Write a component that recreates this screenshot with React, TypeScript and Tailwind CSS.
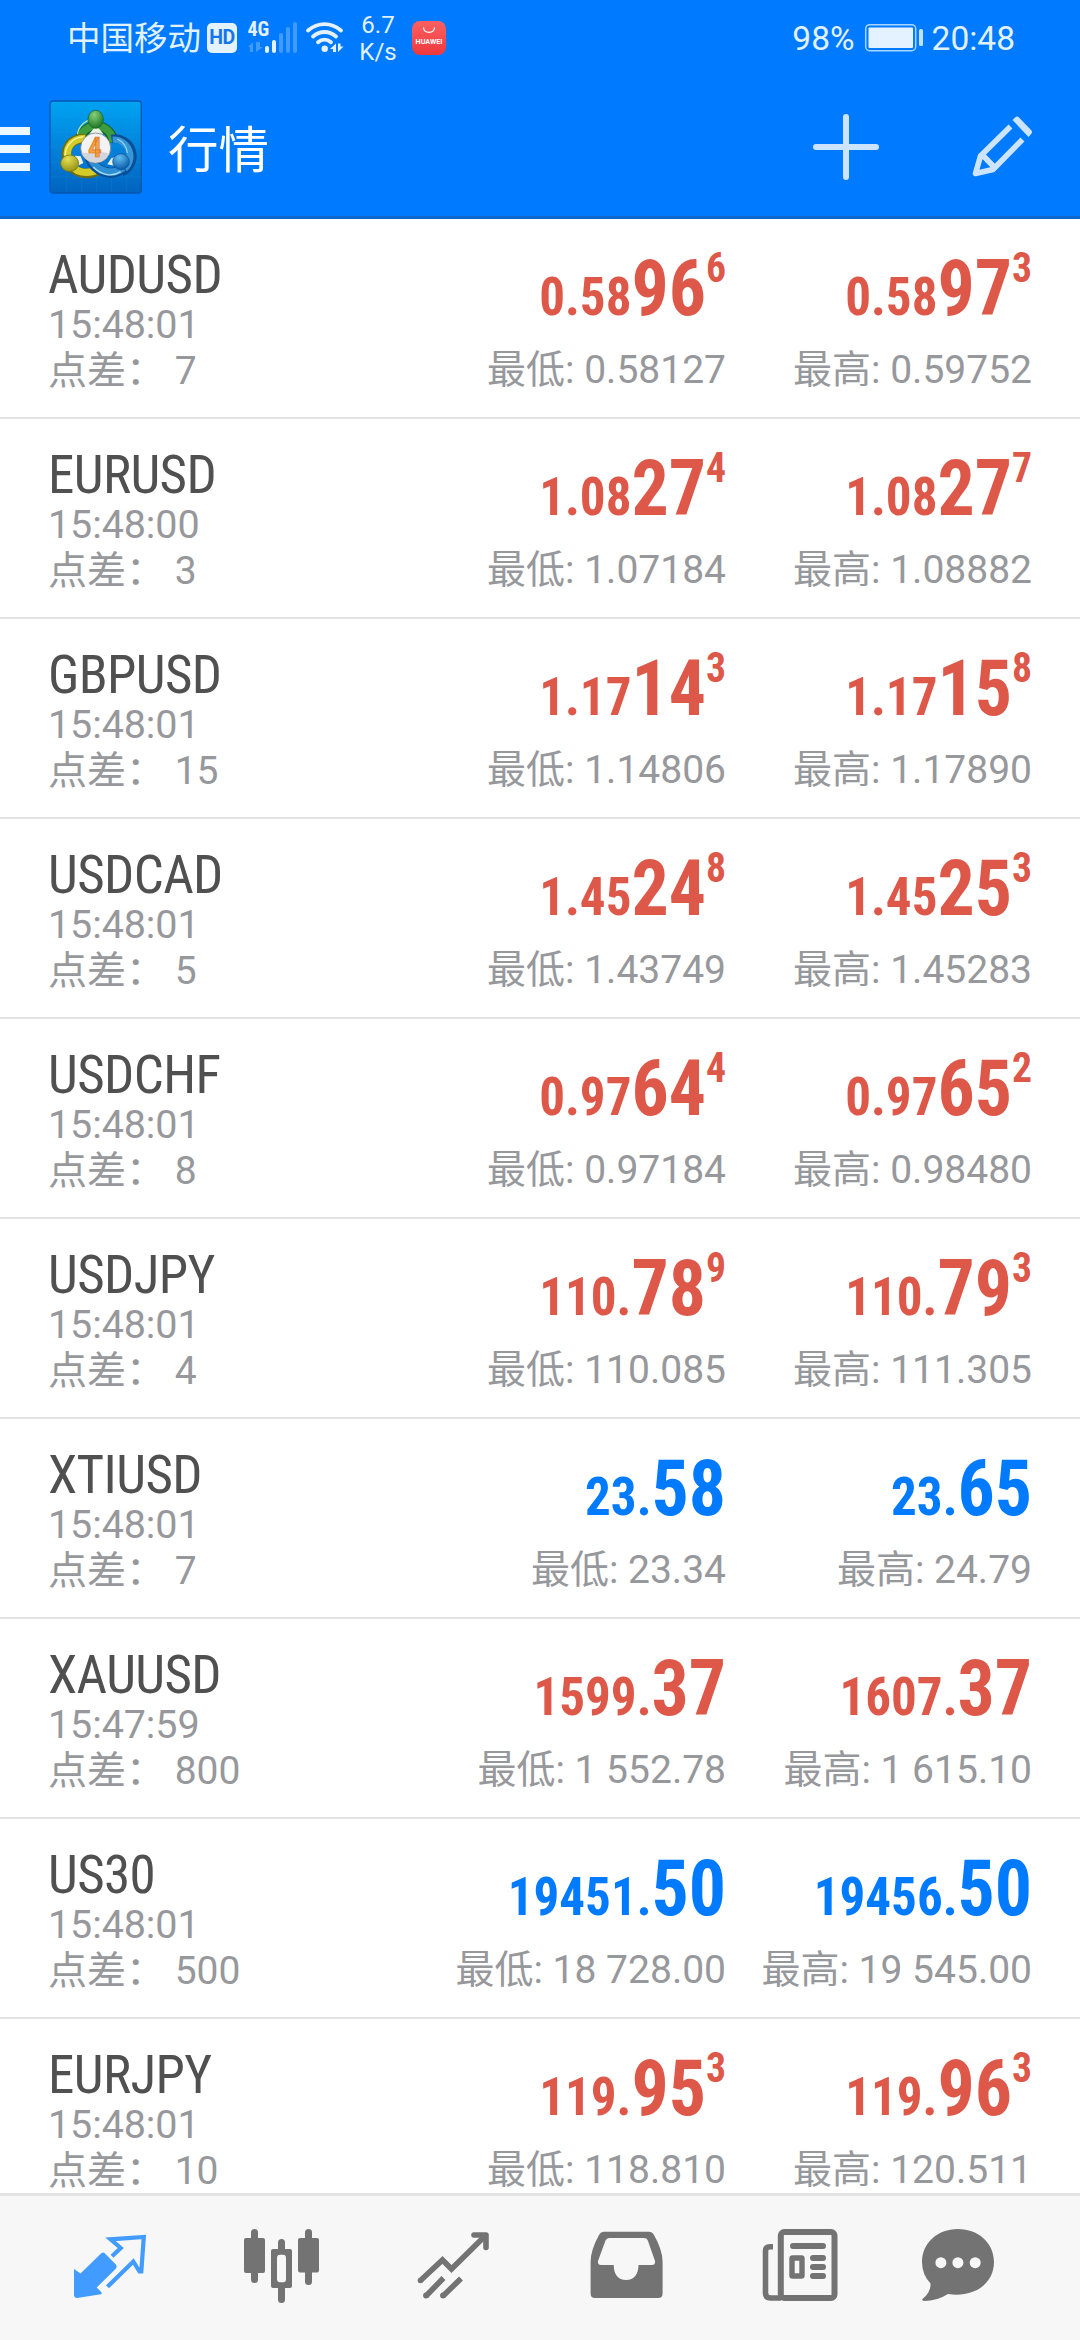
import React from "react";

type Price = { small: string; big: string; sup?: string };
type Quote = {
  symbol: string;
  time: string;
  spread: string;
  up?: boolean;
  bid: Price;
  ask: Price;
  low: string;
  high: string;
};

const p = (small: string, big: string, sup?: string): Price => ({ small, big, sup });

const quotes: Quote[] = [
  { symbol: "AUDUSD", time: "15:48:01", spread: "7", bid: p("0.58", "96", "6"), ask: p("0.58", "97", "3"), low: "0.58127", high: "0.59752" },
  { symbol: "EURUSD", time: "15:48:00", spread: "3", bid: p("1.08", "27", "4"), ask: p("1.08", "27", "7"), low: "1.07184", high: "1.08882" },
  { symbol: "GBPUSD", time: "15:48:01", spread: "15", bid: p("1.17", "14", "3"), ask: p("1.17", "15", "8"), low: "1.14806", high: "1.17890" },
  { symbol: "USDCAD", time: "15:48:01", spread: "5", bid: p("1.45", "24", "8"), ask: p("1.45", "25", "3"), low: "1.43749", high: "1.45283" },
  { symbol: "USDCHF", time: "15:48:01", spread: "8", bid: p("0.97", "64", "4"), ask: p("0.97", "65", "2"), low: "0.97184", high: "0.98480" },
  { symbol: "USDJPY", time: "15:48:01", spread: "4", bid: p("110.", "78", "9"), ask: p("110.", "79", "3"), low: "110.085", high: "111.305" },
  { symbol: "XTIUSD", time: "15:48:01", spread: "7", up: true, bid: p("23.", "58"), ask: p("23.", "65"), low: "23.34", high: "24.79" },
  { symbol: "XAUUSD", time: "15:47:59", spread: "800", bid: p("1599.", "37"), ask: p("1607.", "37"), low: "1 552.78", high: "1 615.10" },
  { symbol: "US30", time: "15:48:01", spread: "500", up: true, bid: p("19451.", "50"), ask: p("19456.", "50"), low: "18 728.00", high: "19 545.00" },
  { symbol: "EURJPY", time: "15:48:01", spread: "10", bid: p("119.", "95", "3"), ask: p("119.", "96", "3"), low: "118.810", high: "120.511" },
];

function SignalIcon() {
  return (
    <svg className="ml-[8px] h-[40px] w-[54px] overflow-visible" viewBox="245 18 54 40">
      <text x="247.5" y="36.3" fontSize="20" fontWeight="700" fill="#e4f1ff" fontFamily="'Roboto Condensed', Roboto, sans-serif">4G</text>
      <path d="M248 47l5-5v10h-3v-5zM256 42v10l7-5h-3v-5z" fill="#3f9bff" />
      <rect x="265" y="46" width="4" height="7" rx="2" fill="#e4f1ff" />
      <rect x="272" y="40" width="4" height="13" rx="2" fill="#e4f1ff" />
      <rect x="279" y="33" width="4" height="20" rx="2" fill="#3f9bff" />
      <rect x="286" y="27" width="4" height="26" rx="2" fill="#3f9bff" />
      <rect x="293" y="22" width="4" height="31" rx="2" fill="#3f9bff" />
    </svg>
  );
}

function WifiIcon() {
  return (
    <svg className="ml-[6px] h-[36px] w-[40px]" viewBox="305 20 40 36" fill="none" stroke="#e4f1ff" strokeWidth="3.8" strokeLinecap="round">
      <path d="M308 30.5C318 22 331 22 341 30.5" />
      <path d="M313 36.5C320 30.5 329 30.5 336 36.5" />
      <path d="M318 42.3C322 38.8 327 38.8 331 42.3" />
      <circle cx="324.700" cy="48.800" r="3.200" fill="#e4f1ff" stroke="none" />
      <path d="M330 49l6-5.500v8.500h-3v-3zM338 43.500v8.500l5.500-5.500h-3v-3z" fill="#e4f1ff" stroke="none" />
    </svg>
  );
}

function StatusBar() {
  return (
    <div className="flex h-[76px] items-center pl-[67px] pr-[65px] text-[#e0f1ff]">
      <span className="w-[136px] pt-[2px] text-[33.500px] leading-[48px] whitespace-nowrap">中国移动</span>
      <span className="ml-[4px] flex h-[30px] w-[30px] items-center justify-center rounded-[5px] bg-[#e4f1ff] text-[19.500px] leading-none font-bold tracking-[-0.500px] text-[#1476ec]">
        HD
      </span>
      <SignalIcon />
      <WifiIcon />
      <span className="ml-[16px] flex w-[34px] flex-col items-center pt-[2px] text-[24px] leading-[27px]">
        <span>6.7</span>
        <span>K/s</span>
      </span>
      <span className="ml-[17px] flex h-[34px] w-[34px] flex-col items-center rounded-[8px] bg-linear-to-b from-[#fd6063] to-[#ee373c]">
        <svg className="mt-[6px] h-[7px] w-[14px]" viewBox="0 0 14 7" fill="none" stroke="#ffffff" strokeWidth="1.200">
          <path d="M1.500 0.500C2 7 12 7 12.500 0.500" />
        </svg>
        <span className="mt-[4px] text-[7.200px] leading-[7px] font-bold text-white">HUAWEI</span>
      </span>
      <span className="ml-auto pt-[2px] text-[33.500px] leading-[48px]">98%</span>
      <svg className="ml-[9px] h-[30px] w-[60px]" viewBox="863 23 60 30">
        <rect x="864.700" y="24.700" width="50" height="26" rx="4" fill="none" stroke="#a8d5ff" strokeWidth="1.500" />
        <rect x="867.500" y="27.500" width="44.500" height="20.500" rx="1" fill="#e4f1ff" />
        <rect x="918" y="29" width="4" height="17" rx="1.500" fill="#c0e0ff" />
      </svg>
      <span className="ml-[8px] pt-[2px] text-[33.500px] leading-[48px]">20:48</span>
    </div>
  );
}

function Logo() {
  return (
    <svg className="h-[96px] w-[96px]" viewBox="24 26 288 288">
      <defs>
        <linearGradient id="tile" x1="0" y1="0" x2="0" y2="1">
          <stop offset="0" stopColor="#00a3f2" />
          <stop offset="0.500" stopColor="#0283dc" />
          <stop offset="1" stopColor="#0163bf" />
        </linearGradient>
        <radialGradient id="green" cx="0.400" cy="0.250" r="0.800">
          <stop offset="0" stopColor="#86d07a" />
          <stop offset="1" stopColor="#17701f" />
        </radialGradient>
        <radialGradient id="yellow" cx="0.400" cy="0.250" r="0.800">
          <stop offset="0" stopColor="#e6e055" />
          <stop offset="1" stopColor="#8f8d10" />
        </radialGradient>
        <radialGradient id="blue" cx="0.400" cy="0.250" r="0.800">
          <stop offset="0" stopColor="#62bdf0" />
          <stop offset="1" stopColor="#0556a5" />
        </radialGradient>
      </defs>
      <rect x="30" y="32" width="274" height="276" rx="10" fill="url(#tile)" stroke="#0757ae" strokeWidth="4" />
      <path d="M80 34V306M125 34V306M170 34V306M215 34V306M260 34V306M32 80H302M32 125H302M32 170H302M32 215H302M32 260H302" stroke="#2b9be6" strokeWidth="1.500" opacity="0.350" />
      <path d="M118 160A51 51 0 1 1 220 158" fill="none" stroke="#145f1e" strokeWidth="30" />
      <path d="M118 158A50 50 0 1 1 219 156" fill="none" stroke="#3d9c3d" strokeWidth="23" />
      <path d="M112 132A56 56 0 0 1 160 86" fill="none" stroke="#aee0a2" strokeWidth="4" />
      <path d="M215 146A52 52 0 0 1 245 245" fill="none" stroke="#0a4f96" strokeWidth="26" />
      <path d="M218 148A50 50 0 0 1 248 240" fill="none" stroke="#3596d8" strokeWidth="19" />
      <path d="M232 146A52 52 0 0 1 262 188" fill="none" stroke="#9fd8f7" strokeWidth="4" />
      <path d="M136 145C90 143 68 178 86 214C100 250 140 256 172 242" fill="none" stroke="#6f6d10" strokeWidth="29" />
      <path d="M136 144C92 144 71 178 88 214C102 248 140 252 170 240" fill="none" stroke="#d2cb28" strokeWidth="22" />
      <path d="M76 196C74 166 100 142 130 139" fill="none" stroke="#f8f59a" strokeWidth="4" />
      <path d="M148 200C165 246 215 262 252 232" fill="none" stroke="#0a4f96" strokeWidth="30" />
      <path d="M150 200C167 243 214 258 250 232" fill="none" stroke="#2e8fd4" strokeWidth="22" />
      <path d="M160 230C184 256 218 260 242 244" fill="none" stroke="#a5dcf8" strokeWidth="4" />
      <path d="M148 130l14-16h14l14 16zM104 196l18 2 8 20-16 8zM202 222l12-18 16-6v30z" fill="#e9f2e4" />
      <ellipse cx="167" cy="87" rx="23" ry="27" fill="url(#green)" stroke="#145f1e" strokeWidth="2" />
      <ellipse cx="89" cy="219" rx="27" ry="25" fill="url(#yellow)" stroke="#6f6d10" strokeWidth="2" />
      <ellipse cx="243" cy="214" rx="25" ry="24" fill="url(#blue)" stroke="#0a4f96" strokeWidth="2" />
      <circle cx="167" cy="173" r="45" fill="#f3f3f5" stroke="#85888a" strokeWidth="2.500" />
      <path d="M124 184A44 44 0 0 0 207 190C180 178 150 196 124 184z" fill="#d5d5dc" />
      <text x="165" y="201" textAnchor="middle" fontSize="82" fontWeight="700" fill="#f6a23a" stroke="#d9742a" strokeWidth="2" fontFamily="'Roboto Condensed', Roboto, sans-serif">4</text>
    </svg>
  );
}

function Toolbar() {
  return (
    <div className="flex h-[140px] items-center pt-[2px] pr-[43px]">
      <div className="mt-[4px] flex w-[30px] flex-col gap-[10px]">
        <span className="h-[8px] bg-[#ebf8ff]" />
        <span className="h-[8px] bg-[#ebf8ff]" />
        <span className="h-[8px] bg-[#ebf8ff]" />
      </div>
      <div className="ml-[18px] flex h-[96px] w-[96px]">
        <Logo />
      </div>
      <h1 className="ml-[24px] pt-[7px] text-[50.500px] leading-[60px] text-white">行情</h1>
      <svg className="ml-auto h-[70px] w-[70px]" viewBox="811 112 70 70" stroke="#cce4ff" strokeWidth="6" strokeLinecap="round">
        <path d="M816 147H876M846 117V177" />
      </svg>
      <svg className="ml-[86px] h-[70px] w-[70px]" viewBox="967 112 70 70" fill="none" stroke="#cce4ff" strokeWidth="5.600">
        <path d="M1018.500 117L1031.500 130.500Q1032.500 132.500 1031.500 133.500L1028.500 137L1012.500 120L1015 117.500Q1016.800 116 1018.500 117Z" fill="#cce4ff" stroke="none" />
        <path d="M1010.500 126.500L980.500 156L975.500 173.500L993 169.500L1022.500 139.500M983 155.500L995.500 168.500" strokeLinejoin="round" />
      </svg>
    </div>
  );
}

function PriceText({ price }: { price: Price }) {
  return (
    <div className="flex h-[76px] origin-right scale-x-[0.945] items-baseline justify-end font-['Roboto_Condensed'] leading-[76px] font-bold whitespace-nowrap">
      <span className="text-[54px]">{price.small}</span>
      <span className="text-[78px]">{price.big}</span>
      {price.sup && <span className="relative -top-[33px] text-[42px]">{price.sup}</span>}
    </div>
  );
}

function QuoteRow({ q }: { q: Quote }) {
  return (
    <li className="flex h-[200px] shrink-0 justify-between border-b-2 border-[#e3e3e3] pr-[48px] pl-[48px] text-[39.500px] leading-[46px] text-[#97989c]">
      <div className="pt-[29px]">
        <div className="font-['Roboto_Condensed'] text-[53px] leading-[54px] tracking-[-0.600px] text-[#505050]">{q.symbol}</div>
        <div className="tracking-[-0.100px]">{q.time}</div>
        <div className="text-[39px]">点差： {q.spread}</div>
      </div>
      <div className="flex text-right">
        <div className={q.up ? "w-[306px] pt-[32px] text-[#007aff]" : "w-[306px] pt-[32px] text-[#dd5849]"}>
          <PriceText price={q.bid} />
          <div className="mt-[20px] text-[39px] whitespace-nowrap text-[#97989c]">最低: {q.low}</div>
        </div>
        <div className={q.up ? "w-[306px] pt-[32px] text-[#007aff]" : "w-[306px] pt-[32px] text-[#dd5849]"}>
          <PriceText price={q.ask} />
          <div className="mt-[20px] text-[39px] whitespace-nowrap text-[#97989c]">最高: {q.high}</div>
        </div>
      </div>
    </li>
  );
}

const tabClass = "h-[144px] w-[172px]";

function TabBar() {
  return (
    <nav className="flex h-[147px] shrink-0 border-t-[3px] border-[#e3e3e3] bg-[#f7f7f7] pl-[24px]">
      <svg className={tabClass} viewBox="24 2196 172 144">
        <path d="M112 2256.200L120.700 2248L110.500 2239.300L143.800 2237L141.300 2271.500H139.500L133.300 2261.500L107.500 2286.800" fill="none" stroke="#429bff" strokeWidth="4.200" />
        <path d="M74 2269L80.500 2273.500L101.300 2253.300Q103 2252 104.500 2253L116.300 2265Q117 2267 116 2268.500L96.700 2287.500L101.500 2292.300Q102 2294 101 2294.300L77 2298Q74.500 2298 74 2295.500Z" fill="#429bff" />
      </svg>
      <svg className={tabClass} viewBox="196 2196 172 144" fill="#737373">
        <rect x="251" y="2229" width="7" height="54" rx="3.500" />
        <rect x="244" y="2238" width="21" height="35" rx="2" />
        <rect x="305" y="2229" width="7" height="56" rx="3.500" />
        <rect x="298" y="2238" width="21" height="34.500" rx="2" />
        <rect x="278" y="2239" width="7" height="64" rx="3.500" />
        <rect x="271" y="2249" width="21" height="39" rx="2" />
        <rect x="277" y="2254.700" width="9" height="27.500" rx="3" fill="#f7f7f7" />
      </svg>
      <svg className={tabClass} viewBox="368 2196 172 144" fill="none" stroke="#737373" strokeWidth="5.600">
        <path d="M420.500 2280.500L442.500 2260L451.500 2269L486 2235" />
        <path d="M474 2235H486V2247.500" strokeLinecap="round" strokeLinejoin="round" />
        <path d="M426 2296L443.500 2278M443 2296L461 2278.500" />
        <g fill="#737373" stroke="none">
          <circle cx="420.500" cy="2280.500" r="2.800" />
          <circle cx="426" cy="2295.500" r="2.900" />
          <circle cx="443" cy="2295.500" r="2.900" />
        </g>
      </svg>
      <svg className={tabClass} viewBox="540 2196 172 144">
        <path fill="#737373" fillRule="evenodd" d="M604 2231.700H649Q652 2231.700 654 2235Q662.600 2250 662.600 2262V2293.500Q662.600 2298 658 2298H595Q590.600 2298 590.600 2293.500V2262Q590.600 2250 599 2235Q601 2231.700 604 2231.700ZM609 2238Q606.500 2238 605.500 2240.500L598 2261Q597.500 2265 601 2265H613.700C613.700 2274 618 2280 626.200 2280C634 2280 638.500 2274 638.500 2265H652Q655.500 2265 655 2261L648 2241Q647 2238 644 2238Z" />
      </svg>
      <svg className={tabClass} viewBox="712 2196 172 144" fill="none" stroke="#737373" strokeWidth="6">
        <rect x="780.800" y="2232" width="53.700" height="66" rx="3.500" />
        <path d="M773 2246.800H770Q765.500 2246.800 765.500 2251V2293Q765.500 2298 770.500 2298H781" strokeWidth="5.600" />
        <path d="M793 2246H823M813 2258H823M813 2267H823M813 2276H823" strokeLinecap="round" />
        <rect x="792" y="2258" width="10" height="18" rx="0.500" strokeWidth="5.400" />
      </svg>
      <svg className={tabClass} viewBox="884 2196 172 144">
        <path fill="#737373" d="M957.900 2229C978.500 2229 994 2243 994 2262C994 2283 975 2298 948 2294Q937 2301 924 2301Q921 2300.500 923 2298.500Q931 2292 930.500 2283.500Q922 2274.500 922 2262C922 2243 937.500 2229 957.900 2229Z" />
        <g fill="#f7f7f7">
          <circle cx="940.900" cy="2262.700" r="5.500" />
          <circle cx="957.900" cy="2262.700" r="5.500" />
          <circle cx="975.200" cy="2262.700" r="5.500" />
        </g>
      </svg>
    </nav>
  );
}

export default function App() {
  return (
    <div className="flex h-[2340px] w-[1080px] flex-col overflow-hidden bg-white font-[Roboto,'Noto_Sans_CJK_SC',sans-serif]">
      <header className="h-[219px] shrink-0 border-b-[3px] border-[#1068cc] bg-[#007aff]">
        <StatusBar />
        <Toolbar />
      </header>
      <ul className="flex min-h-0 flex-1 flex-col overflow-hidden">
        {quotes.map((q) => (
          <QuoteRow key={q.symbol} q={q} />
        ))}
      </ul>
      <TabBar />
    </div>
  );
}
